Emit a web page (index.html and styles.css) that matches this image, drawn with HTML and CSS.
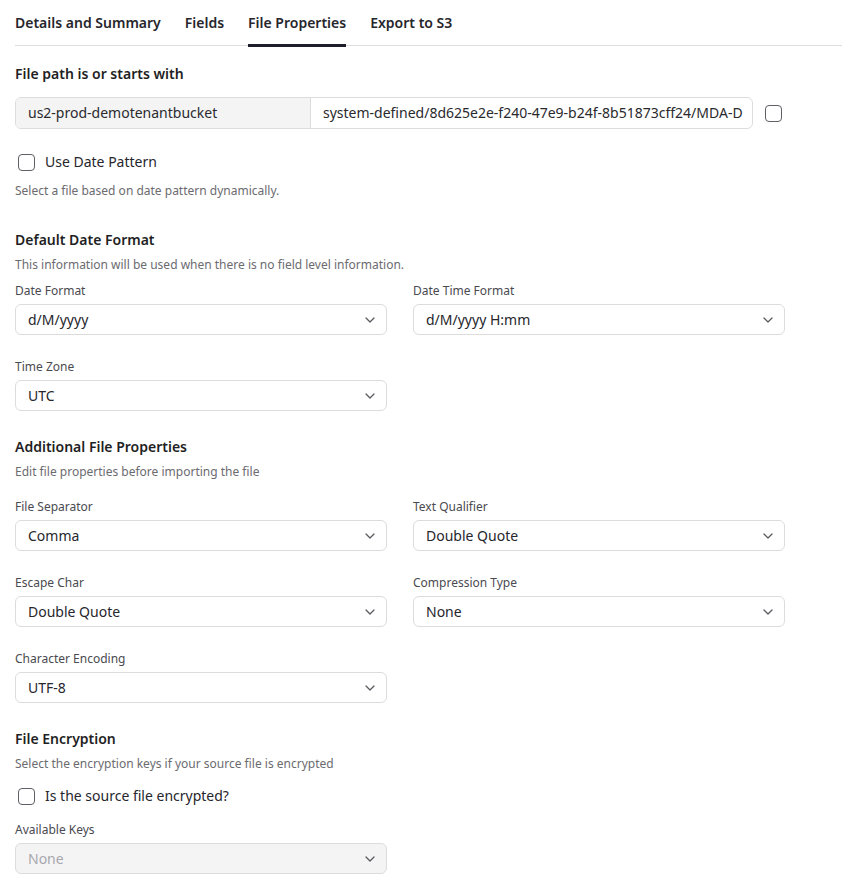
FILE: index.html
```html
<!DOCTYPE html>
<html lang="en">
<head>
<meta charset="utf-8">
<title>File Properties</title>
<link rel="stylesheet" href="styles.css">
</head>
<body>
<div class="page">
  <nav class="tabs">
    <div class="tab">Details and Summary</div>
    <div class="tab">Fields</div>
    <div class="tab active">File Properties</div>
    <div class="tab">Export to S3</div>
  </nav>

  <div class="content">
    <h3 class="heading h-path">File path is or starts with</h3>
    <div class="path-row">
      <div class="path-group">
        <div class="path-bucket">us2-prod-demotenantbucket</div>
        <div class="path-key">system-defined/8d625e2e-f240-47e9-b24f-8b51873cff24/MDA-D</div>
      </div>
      <span class="checkbox"></span>
    </div>

    <label class="check-row cr-date"><span class="checkbox"></span><span>Use Date Pattern</span></label>
    <p class="help h-date">Select a file based on date pattern dynamically.</p>

    <h3 class="heading h-section1">Default Date Format</h3>
    <p class="desc">This information will be used when there is no field level information.</p>

    <div class="grid g-first">
      <div class="field">
        <div class="label">Date Format</div>
        <div class="select"><span>d/M/yyyy</span><svg class="chev" viewBox="0 0 10 6"><path d="M1 1l4 4 4-4"/></svg></div>
      </div>
      <div class="field">
        <div class="label">Date Time Format</div>
        <div class="select"><span>d/M/yyyy H:mm</span><svg class="chev" viewBox="0 0 10 6"><path d="M1 1l4 4 4-4"/></svg></div>
      </div>
      <div class="field">
        <div class="label">Time Zone</div>
        <div class="select"><span>UTC</span><svg class="chev" viewBox="0 0 10 6"><path d="M1 1l4 4 4-4"/></svg></div>
      </div>
    </div>

    <h3 class="heading h-section">Additional File Properties</h3>
    <p class="desc">Edit file properties before importing the file</p>

    <div class="grid g-add">
      <div class="field">
        <div class="label">File Separator</div>
        <div class="select"><span>Comma</span><svg class="chev" viewBox="0 0 10 6"><path d="M1 1l4 4 4-4"/></svg></div>
      </div>
      <div class="field">
        <div class="label">Text Qualifier</div>
        <div class="select"><span>Double Quote</span><svg class="chev" viewBox="0 0 10 6"><path d="M1 1l4 4 4-4"/></svg></div>
      </div>
      <div class="field">
        <div class="label">Escape Char</div>
        <div class="select"><span>Double Quote</span><svg class="chev" viewBox="0 0 10 6"><path d="M1 1l4 4 4-4"/></svg></div>
      </div>
      <div class="field">
        <div class="label">Compression Type</div>
        <div class="select"><span>None</span><svg class="chev" viewBox="0 0 10 6"><path d="M1 1l4 4 4-4"/></svg></div>
      </div>
      <div class="field">
        <div class="label">Character Encoding</div>
        <div class="select"><span>UTF-8</span><svg class="chev" viewBox="0 0 10 6"><path d="M1 1l4 4 4-4"/></svg></div>
      </div>
    </div>

    <h3 class="heading h-section">File Encryption</h3>
    <p class="desc">Select the encryption keys if your source file is encrypted</p>
    <label class="check-row cr-enc"><span class="checkbox"></span><span>Is the source file encrypted?</span></label>

    <div class="grid g-keys">
      <div class="field">
        <div class="label">Available Keys</div>
        <div class="select disabled"><span>None</span><svg class="chev" viewBox="0 0 10 6"><path d="M1 1l4 4 4-4"/></svg></div>
      </div>
    </div>
  </div>
</div>
</body>
</html>
```

FILE: styles.css
```css
* { box-sizing: border-box; }

html, body {
  margin: 0;
  padding: 0;
  background: #ffffff;
}

body {
  font-family: "Noto Sans", "Open Sans", "Liberation Sans", sans-serif;
  color: #1f1f24;
}

.page {
  padding-left: 15px;
}

.tabs {
  display: flex;
  gap: 24px;
  border-bottom: 1px solid #dedede;
}

.tab {
  font-size: 14px;
  line-height: 20px;
  font-weight: 600;
  color: #26262c;
  padding: 13px 0 11px;
  border-bottom: 3px solid transparent;
  margin-bottom: -2px;
}

.tab.active {
  border-bottom-color: #1f1f2b;
}

.content {
  width: 771px;
}

.heading {
  margin: 0;
  font-size: 14px;
  line-height: 20px;
  font-weight: 600;
  color: #1f1f24;
}

.h-path { margin-top: 18px; }
.h-section1 { margin-top: 31px; }
.h-section { margin-top: 26px; }

.path-row {
  display: flex;
  align-items: center;
  gap: 12px;
  margin-top: 13px;
}

.path-group {
  display: flex;
  width: 738px;
  height: 32px;
  border: 1px solid #dcdcdc;
  border-radius: 6px;
  overflow: hidden;
  font-size: 14px;
}

.path-bucket {
  width: 295px;
  background: #f4f4f5;
  border-right: 1px solid #dcdcdc;
  padding: 0 12px;
  line-height: 30px;
  color: #2a2a2e;
}

.path-key {
  flex: 1;
  padding: 0 12px;
  line-height: 30px;
  color: #2a2a2e;
  white-space: nowrap;
  overflow: hidden;
}

.checkbox {
  display: inline-block;
  width: 17px;
  height: 17px;
  border: 1.5px solid #5f5f66;
  border-radius: 4px;
  background: #fff;
  flex: none;
}

.check-row {
  display: flex;
  align-items: center;
  gap: 10px;
  padding-left: 3px;
  font-size: 14px;
  line-height: 20px;
  color: #26262c;
}

.cr-date { margin-top: 23px; }
.cr-enc { margin-top: 14px; }

.help, .desc {
  margin: 0;
  font-size: 12px;
  line-height: 16px;
  color: #6b6b70;
}

.h-date { margin-top: 11px; }
.desc { margin-top: 7px; }

.grid {
  display: grid;
  grid-template-columns: 372px 372px;
  column-gap: 26px;
  row-gap: 24px;
}

.g-first { margin-top: 10px; }
.g-add { margin-top: 19px; row-gap: 24px; }
.g-keys { margin-top: 16px; }

.label {
  font-size: 12px;
  line-height: 16px;
  color: #4a4a50;
  margin-bottom: 5px;
}

.select {
  display: flex;
  align-items: center;
  justify-content: space-between;
  height: 31px;
  border: 1px solid #dcdcdc;
  border-radius: 6px;
  padding: 0 11px 0 12px;
  font-size: 14px;
  color: #26262c;
  background: #fff;
}

.select.disabled {
  background: #f4f4f5;
  color: #a8a8ad;
}

.chev {
  width: 10px;
  height: 6px;
  fill: none;
  stroke: #5a5a60;
  stroke-width: 1.3;
  stroke-linecap: round;
  stroke-linejoin: round;
}
```
